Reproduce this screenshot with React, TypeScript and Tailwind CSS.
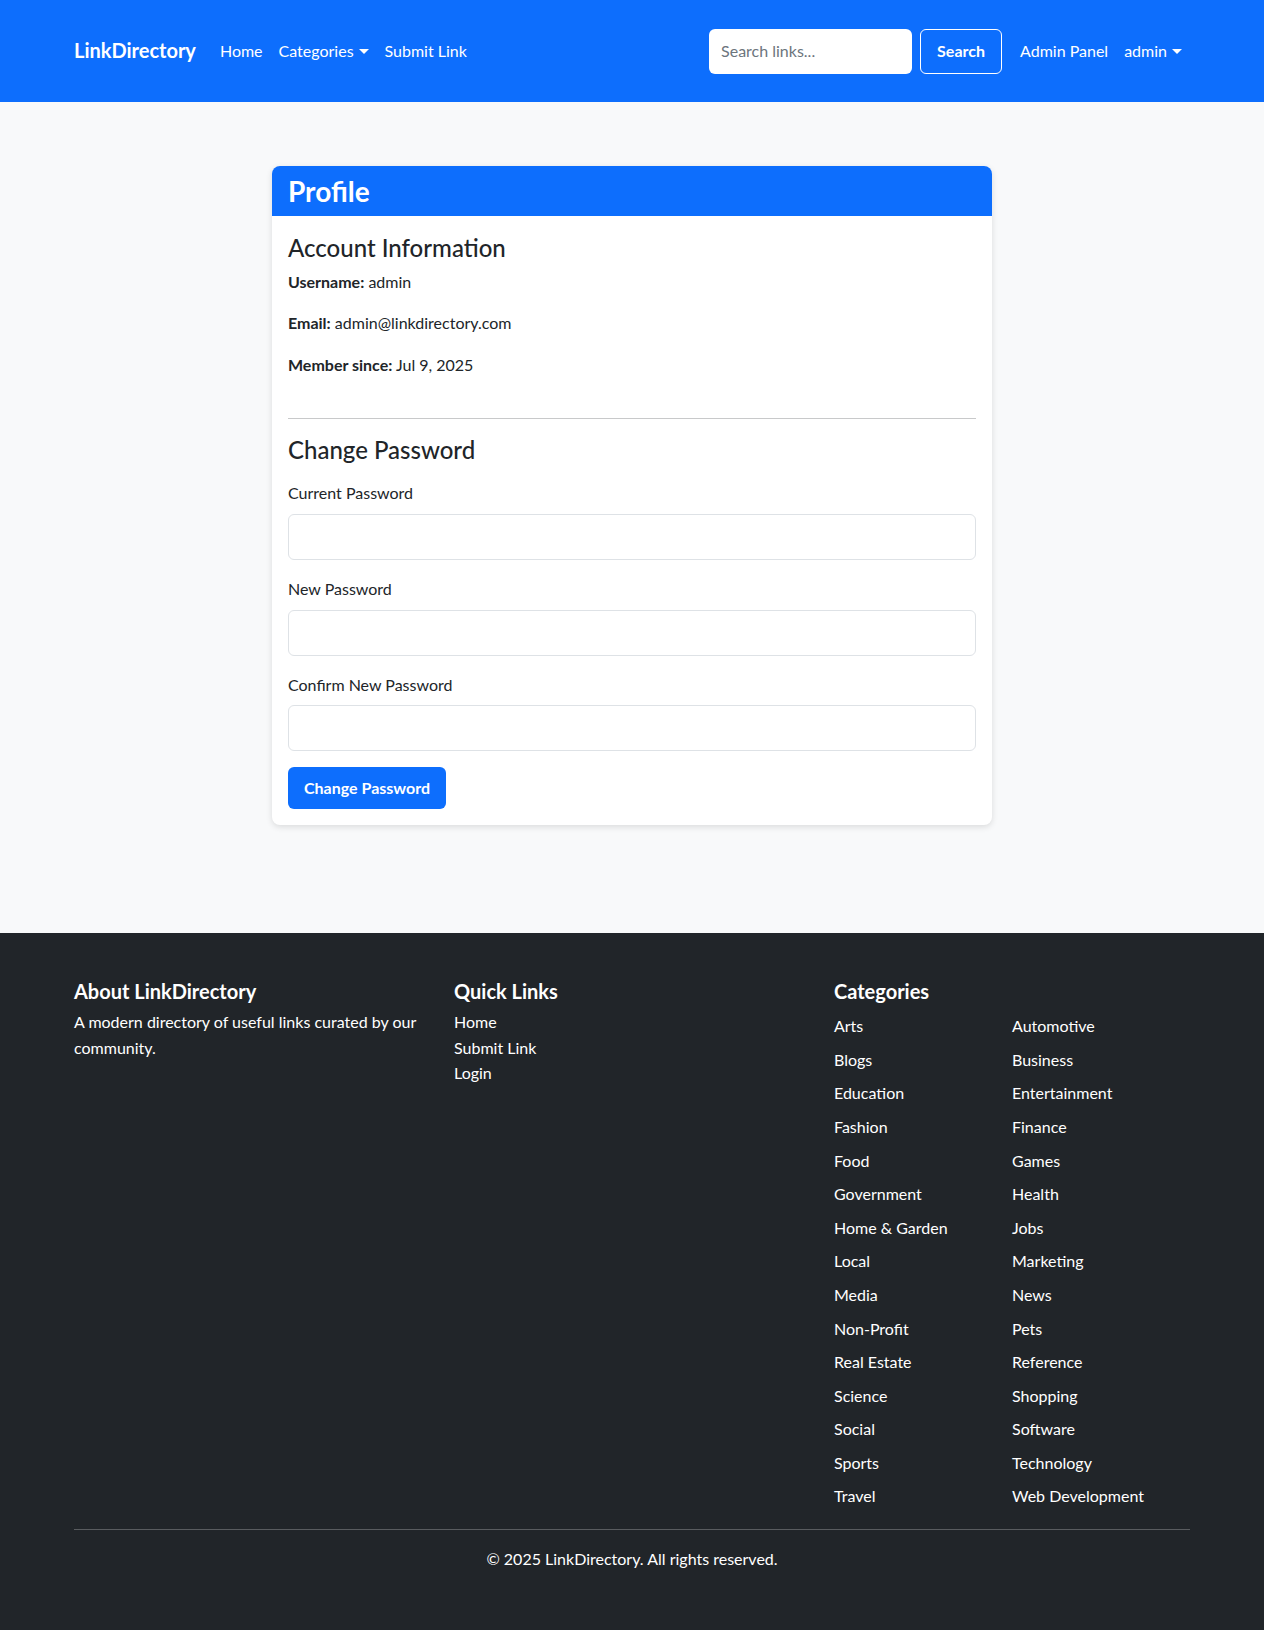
import React from "react";

const cats = [
  "Arts", "Automotive", "Blogs", "Business", "Education", "Entertainment", "Fashion", "Finance",
  "Food", "Games", "Government", "Health", "Home & Garden", "Jobs", "Local", "Marketing",
  "Media", "News", "Non-Profit", "Pets", "Real Estate", "Reference", "Science", "Shopping",
  "Social", "Software", "Sports", "Technology", "Travel", "Web Development",
];

function Caret() {
  return (
    <span className="ml-[5px] inline-block h-0 w-0 border-x-[5px] border-t-[5px] border-x-transparent border-t-white align-middle" />
  );
}

function Field({ label }: { label: string }) {
  return (
    <div className="mb-4">
      <label className="mb-2 block leading-[25.6px] text-[16px]">{label}</label>
      <input type="password" className="block h-[46px] w-full rounded-[6px] border border-[#dee2e6] bg-white px-3" />
    </div>
  );
}

export default function App() {
  return (
    <div className="font-['Lato',sans-serif] text-[16px] leading-[25.6px] text-[#212529]">
      <header className="h-[102px] bg-[#0d6efd]">
        <div className="mx-auto flex h-full w-[1140px] items-center px-3">
          <a className="mr-4 text-[20px] font-bold text-white">LinkDirectory</a>
          <nav className="flex items-center text-white">
            <a className="px-2">Home</a>
            <a className="flex items-center px-2">Categories<Caret /></a>
            <a className="px-2">Submit Link</a>
          </nav>
          <div className="ml-auto flex items-center">
            <div className="mr-2 flex h-[45px] w-[203px] items-center rounded-[6px] bg-white px-3 text-[#6c757d]">Search links...</div>
            <button className="h-[45px] w-[82px] rounded-[6px] border border-white font-bold text-white">Search</button>
            <div className="ml-[10px] flex items-center text-white">
              <a className="px-2">Admin Panel</a>
              <a className="flex items-center px-2">admin<Caret /></a>
            </div>
          </div>
        </div>
      </header>

      <main className="bg-[#f8f9fa] pb-[108px] pt-[64px]">
        <div className="mx-auto w-[720px] overflow-hidden rounded-[8px] bg-white shadow-[0_2px_6px_rgba(0,0,0,0.12)]">
          <div className="flex h-[50px] items-center bg-[#0d6efd] px-4">
            <h2 className="text-[28px] font-bold leading-[34px] text-white">Profile</h2>
          </div>
          <div className="px-4 pb-4 pt-[18px]">
            <div className="mb-10">
              <h4 className="mb-[6px] text-[24px] font-medium leading-[28.8px]">Account Information</h4>
              <p className="mb-4"><strong>Username:</strong> admin</p>
              <p className="mb-4"><strong>Email:</strong> admin@linkdirectory.com</p>
              <p><strong>Member since:</strong> Jul 9, 2025</p>
            </div>
            <hr className="mb-[17px] border-0 border-t border-[#c8c9ca]" />
            <h4 className="mb-4 text-[24px] font-medium leading-[28.8px]">Change Password</h4>
            <Field label="Current Password" />
            <Field label="New Password" />
            <Field label="Confirm New Password" />
            <button className="h-[42px] rounded-[6px] bg-[#0d6efd] px-4 font-bold text-white">Change Password</button>
          </div>
        </div>
      </main>

      <footer className="bg-[#212529] pb-[58px] pt-[46px] text-white">
        <div className="mx-auto w-[1140px] px-3">
          <div className="grid grid-cols-3 gap-6">
            <div>
              <h5 className="mb-[6px] text-[20px] font-bold leading-[24px]">About LinkDirectory</h5>
              <p>A modern directory of useful links curated by our community.</p>
            </div>
            <div>
              <h5 className="mb-[6px] text-[20px] font-bold leading-[24px]">Quick Links</h5>
              <ul>
                <li>Home</li>
                <li>Submit Link</li>
                <li>Login</li>
              </ul>
            </div>
            <div>
              <h5 className="mb-[6px] text-[20px] font-bold leading-[24px]">Categories</h5>
              <ul className="grid grid-cols-2 pt-[4px]">
                {cats.map((c) => (
                  <li key={c} className="mb-2">{c}</li>
                ))}
              </ul>
            </div>
          </div>
          <hr className="mb-4 mt-3 border-0 border-t border-[#595c5f]" />
          <p className="text-center">© 2025 LinkDirectory. All rights reserved.</p>
        </div>
      </footer>
    </div>
  );
}
